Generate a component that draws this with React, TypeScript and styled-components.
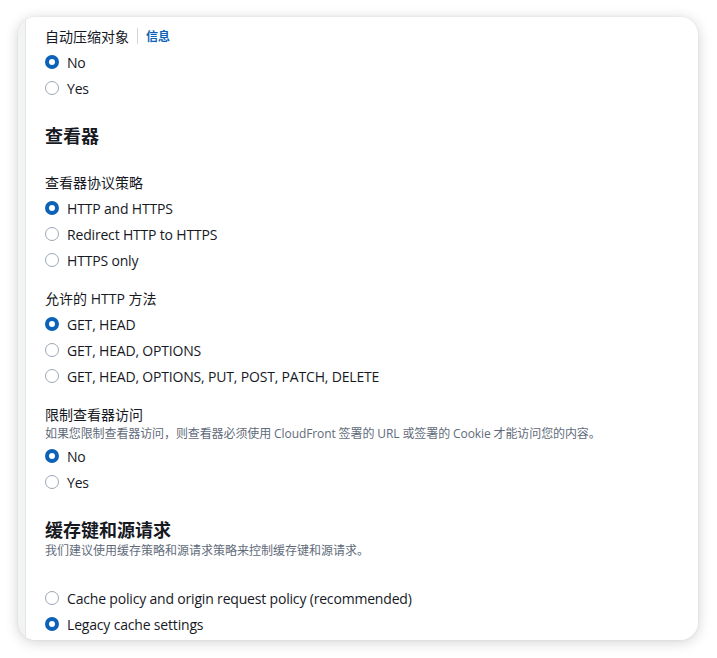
import React from 'react';
import styled, { createGlobalStyle } from 'styled-components';

const GlobalStyle = createGlobalStyle`
  html, body {
    margin: 0;
    padding: 0;
    background: #ffffff;
  }
  body {
    font-family: "Open Sans", "Noto Sans CJK SC", sans-serif;
    color: #16191f;
  }
`;

const Page = styled.div`
  padding: 17px 19px 18px 18px;
`;

const Card = styled.div`
  width: 680px;
  height: 623px;
  border-radius: 18px;
  background: #f2f3f3;
  box-shadow: 0 2px 14px rgba(0, 0, 0, 0.18), 0 0 3px rgba(0, 0, 0, 0.06);
  overflow: hidden;
  display: flex;
`;

const Content = styled.div`
  flex: 1;
  margin-left: 7px;
  background: #ffffff;
  border-left: 1px solid #e3e5e8;
  padding: 8px 20px 0 19px;
`;

const Field = styled.div`
  display: flex;
  flex-direction: column;
  & + & {
    margin-top: 14px;
  }
`;

const LabelRow = styled.div`
  display: flex;
  align-items: center;
  height: 22px;
  font-size: 14px;
  margin-bottom: 2px;
`;

const Divider = styled.span`
  width: 1px;
  height: 16px;
  background: #d1d5db;
  margin: 0 8px;
`;

const InfoLink = styled.span`
  color: #0b62b8;
  font-size: 12px;
  font-weight: 700;
`;

const Description = styled.div`
  font-size: 12px;
  line-height: 18px;
  color: #5f6b7a;
  margin-top: -2px;
  letter-spacing: -0.1px;
`;

const Heading = styled.h2<{ $gap: number }>`
  margin: 23px 0 ${p => p.$gap}px;
  font-size: 18px;
  line-height: 24px;
  font-weight: 700;
`;

const SectionDesc = styled.div`
  font-size: 12px;
  line-height: 18px;
  color: #5f6b7a;
  margin: 0 0 25px;
`;

const RadioRow = styled.label`
  display: flex;
  align-items: center;
  height: 26px;
  font-size: 14px;
  letter-spacing: -0.18px;
`;

const RadioCircle = styled.span<{ $checked: boolean }>`
  box-sizing: border-box;
  width: 14px;
  height: 14px;
  border-radius: 50%;
  margin-right: 8px;
  background: #ffffff;
  border: ${p => (p.$checked ? '4px solid #0b62b8' : '1.5px solid #9ba7b6')};
`;

type Option = { label: string; checked?: boolean };

const RadioGroup = ({ options }: { options: Option[] }) => (
  <div>
    {options.map(o => (
      <RadioRow key={o.label}>
        <RadioCircle $checked={!!o.checked} />
        {o.label}
      </RadioRow>
    ))}
  </div>
);

export default function App() {
  return (
    <Page>
      <GlobalStyle />
      <Card>
        <Content>
          <Field>
            <LabelRow>
              自动压缩对象
              <Divider />
              <InfoLink>信息</InfoLink>
            </LabelRow>
            <RadioGroup options={[{ label: 'No', checked: true }, { label: 'Yes' }]} />
          </Field>

          <Heading $gap={23}>查看器</Heading>

          <Field>
            <LabelRow>查看器协议策略</LabelRow>
            <RadioGroup
              options={[
                { label: 'HTTP and HTTPS', checked: true },
                { label: 'Redirect HTTP to HTTPS' },
                { label: 'HTTPS only' }
              ]}
            />
          </Field>
          <Field>
            <LabelRow>允许的 HTTP 方法</LabelRow>
            <RadioGroup
              options={[
                { label: 'GET, HEAD', checked: true },
                { label: 'GET, HEAD, OPTIONS' },
                { label: 'GET, HEAD, OPTIONS, PUT, POST, PATCH, DELETE' }
              ]}
            />
          </Field>
          <Field>
            <LabelRow>限制查看器访问</LabelRow>
            <Description>如果您限制查看器访问，则查看器必须使用 CloudFront 签署的 URL 或签署的 Cookie 才能访问您的内容。</Description>
            <RadioGroup options={[{ label: 'No', checked: true }, { label: 'Yes' }]} />
          </Field>

          <Heading $gap={0}>缓存键和源请求</Heading>
          <SectionDesc>我们建议使用缓存策略和源请求策略来控制缓存键和源请求。</SectionDesc>
          <RadioGroup
            options={[
              { label: 'Cache policy and origin request policy (recommended)' },
              { label: 'Legacy cache settings', checked: true }
            ]}
          />
        </Content>
      </Card>
    </Page>
  );
}
